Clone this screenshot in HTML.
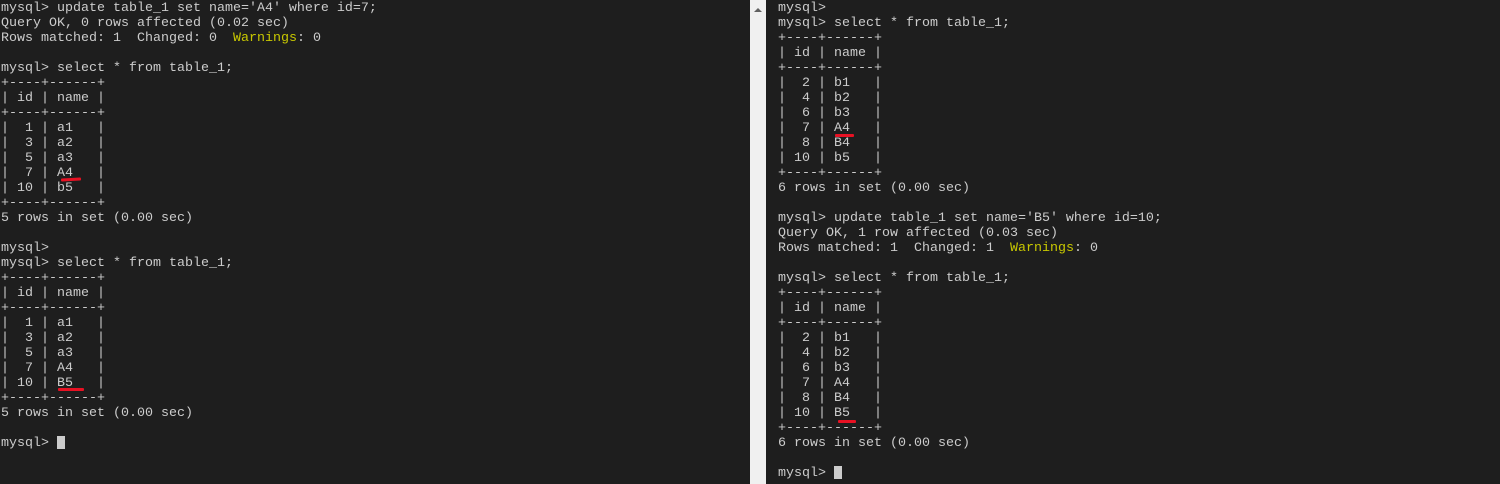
<!DOCTYPE html><html><head><style>
html,body{margin:0;padding:0;width:1500px;height:484px;overflow:hidden;background:#1e1e1e}
pre{margin:0;font-family:"Liberation Mono",monospace;font-size:13.33px;line-height:15px;color:#cccccc;position:absolute;top:1px}
.y{color:#c8c800}
.u{position:absolute;height:3px;background:#e81123;border-radius:1px}
.c{display:inline-block;width:8px;height:13px;background:#cccccc;vertical-align:-3px}
</style></head><body>
<div style="position:absolute;left:750px;top:0;width:16px;height:484px;background:#f0f0f0"></div>
<div style="position:absolute;left:754px;top:8px;width:0;height:0;border-left:4px solid transparent;border-right:4px solid transparent;border-bottom:4px solid #606060"></div>
<pre style="left:1px">mysql&gt; update table_1 set name='A4' where id=7;
Query OK, 0 rows affected (0.02 sec)
Rows matched: 1  Changed: 0  <span class="y">Warnings</span>: 0

mysql&gt; select * from table_1;
+----+------+
| id | name |
+----+------+
|  1 | a1   |
|  3 | a2   |
|  5 | a3   |
|  7 | A4   |
| 10 | b5   |
+----+------+
5 rows in set (0.00 sec)

mysql&gt;
mysql&gt; select * from table_1;
+----+------+
| id | name |
+----+------+
|  1 | a1   |
|  3 | a2   |
|  5 | a3   |
|  7 | A4   |
| 10 | B5   |
+----+------+
5 rows in set (0.00 sec)

mysql&gt; <span class="c"></span></pre>
<pre style="left:778px">mysql&gt;
mysql&gt; select * from table_1;
+----+------+
| id | name |
+----+------+
|  2 | b1   |
|  4 | b2   |
|  6 | b3   |
|  7 | A4   |
|  8 | B4   |
| 10 | b5   |
+----+------+
6 rows in set (0.00 sec)

mysql&gt; update table_1 set name='B5' where id=10;
Query OK, 1 row affected (0.03 sec)
Rows matched: 1  Changed: 1  <span class="y">Warnings</span>: 0

mysql&gt; select * from table_1;
+----+------+
| id | name |
+----+------+
|  2 | b1   |
|  4 | b2   |
|  6 | b3   |
|  7 | A4   |
|  8 | B4   |
| 10 | B5   |
+----+------+
6 rows in set (0.00 sec)

mysql&gt; <span class="c"></span></pre>
<div class="u" style="left:61px;top:178px;width:20px;transform:rotate(-3deg)"></div>
<div class="u" style="left:58px;top:388px;width:26px"></div>
<div class="u" style="left:835px;top:134px;width:19px"></div>
<div class="u" style="left:838px;top:420px;width:18px"></div>
</body></html>
